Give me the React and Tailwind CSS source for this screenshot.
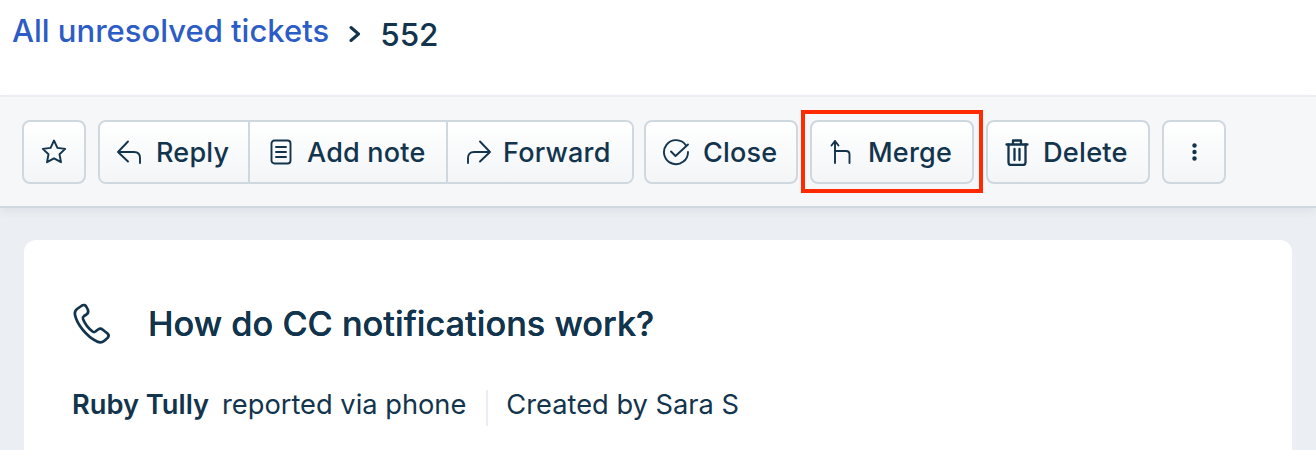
import React from 'react';

function Icon({ children, className = 'w-7 h-7 shrink-0' }) {
  return (
    <svg className={className} viewBox="0 0 28 28" fill="none" stroke="currentColor" strokeWidth="1.9" strokeLinecap="round" strokeLinejoin="round">
      {children}
    </svg>
  );
}

const buttonBase =
  'flex items-center bg-gradient-to-b from-white to-[#f3f5f7] text-[#12344d] text-[27px] font-medium tracking-[0.2px]';

function App() {
  return (
    <div className="h-[450px] w-[1316px] overflow-hidden bg-[#ebeff3] text-[#12344d] font-['Inter',sans-serif]">
      <div className="h-[95px] bg-white px-[12px] pt-[10px] flex items-start">
        <a className="text-[31px] leading-[42px] font-medium text-[#2c5cc5]">All unresolved tickets</a>
        <svg className="ml-[20px] mt-[15px] w-[12px] h-[18px]" viewBox="0 0 12 18" fill="none" stroke="#12344d" strokeWidth="3" strokeLinecap="round" strokeLinejoin="round">
          <path d="M2 2.500l7.500 6.500L2 15.500" />
        </svg>
        <span className="ml-[19px] mt-[4px] text-[31.5px] leading-[42px] font-medium">552</span>
      </div>

      <div className="h-[113px] bg-[#f5f7f9] border-t-2 border-b-2 border-t-[#ebeff3] border-b-[#cfd7df] shadow-[0_4px_8px_rgba(18,52,77,0.06)] pl-[22px] pt-[23px] flex items-start">
        <button className={`${buttonBase} h-[64px] w-[64px] justify-center rounded-[8px] border-2 border-[#cfd7df]`}>
          <Icon>
            <path d="M14 2.500l3.400 7.400 7.800 1-5.700 5.400 1.500 7.900L14 20.300l-7 3.900 1.500-7.900-5.700-5.400 7.800-1z" />
          </Icon>
        </button>

        <div className="ml-[12px] flex h-[64px] rounded-[8px] border-2 border-[#cfd7df]">
          <button className={`${buttonBase} w-[148px] pl-[16px] rounded-l-[6px]`}>
            <Icon>
              <path d="M2 14h16c4 0 6 2.500 6 6v5M12 3.500L2 14l10 9.500" />
            </Icon>
            <span className="ml-[12px] pt-[2px]">Reply</span>
          </button>
          <button className={`${buttonBase} w-[198px] pl-[17px] border-l-2 border-[#cfd7df]`}>
            <Icon>
              <rect x="4.500" y="2.500" width="19" height="23" rx="3" />
              <path d="M9 9h10M9 14h10M9 19h10" />
            </Icon>
            <span className="ml-[12px] pt-[2px]">Add note</span>
          </button>
          <button className={`${buttonBase} w-[186px] pl-[16px] border-l-2 border-[#cfd7df] rounded-r-[6px]`}>
            <Icon>
              <path d="M26 14H10c-4 0-6 2.500-6 6v5M16 3.500L26 14l-10 9.500" />
            </Icon>
            <span className="ml-[11px] pt-[2px]">Forward</span>
          </button>
        </div>

        <button className={`${buttonBase} ml-[10px] h-[64px] w-[154px] pl-[16px] rounded-[8px] border-2 border-[#cfd7df]`}>
          <Icon>
            <path d="M24 7.500A12 12 0 1 0 26 14" />
            <path d="M9 13.500l4.500 4.500L26 6.500" />
          </Icon>
          <span className="ml-[13px] pt-[2px]">Close</span>
        </button>

        <div className="relative ml-[12px]">
          <button className={`${buttonBase} h-[64px] w-[164px] pl-[18px] rounded-[8px] border-2 border-[#cfd7df]`}>
            <Icon>
              <path d="M5 25V3M1.500 7.500L5 3l3.500 4.500" />
              <path d="M5 13h11c2.500 0 3.500 1.500 3.500 3.500V25" />
            </Icon>
            <span className="ml-[10px] pt-[2px]">Merge</span>
          </button>
          <div className="absolute left-[-9px] right-[-9px] top-[-10px] bottom-[-9px] border-4 border-[#ff2a00]" />
        </div>

        <button className={`${buttonBase} ml-[12px] h-[64px] w-[164px] pl-[17px] rounded-[8px] border-2 border-[#cfd7df]`}>
          <svg className="w-[24px] h-[28px] shrink-0" viewBox="0 0 24 28" fill="none" stroke="currentColor" strokeWidth="2.300" strokeLinecap="round" strokeLinejoin="round">
            <path d="M1.500 6.500h21M8 6V2.500h8V6" />
            <path d="M3.500 6.500v18c0 1.500 1 2.500 2.500 2.500h12c1.500 0 2.500-1 2.500-2.500v-18" />
            <path d="M9.500 11v11M14.500 11v11" />
          </svg>
          <span className="ml-[14px] pt-[2px] text-[27.25px]">Delete</span>
        </button>

        <button className={`${buttonBase} ml-[12px] h-[64px] w-[64px] justify-center rounded-[8px] border-2 border-[#cfd7df]`}>
          <svg className="w-[5px] h-[18px]" viewBox="0 0 5 18" fill="currentColor">
            <circle cx="2.500" cy="2.500" r="2.200" />
            <circle cx="2.500" cy="9" r="2.200" />
            <circle cx="2.500" cy="15.500" r="2.200" />
          </svg>
        </button>
      </div>

      <div className="mx-[24px] mt-[32px] h-[240px] rounded-t-[12px] bg-white pl-[48px] pr-[24px] pt-[60px]">
        <div className="flex items-center h-[48px]">
          <svg className="w-[44px] h-[44px] shrink-0" viewBox="0 0 44 44" fill="none" stroke="#12344d" strokeWidth="2.700" strokeLinecap="round" strokeLinejoin="round">
            <path d="M10 3.500l-5 3.500c-2 1.500-2.500 3.500-2 6 2 9 11 21 22 26.500 2.500 1.200 5 1.200 7-.5l3.500-3c1.500-1.500 1.500-3 0-4.500l-5-4c-1.500-1.200-3-1-4.500 0l-2.500 2c-1 .7-2 .7-3 0-4-3-7.500-7.500-9.500-12.500-.4-1.200 0-2.200 1-3l2.500-1.500c1.500-1 2-2.500 1.500-4.500L14.500 5c-.8-2-2.800-2.500-4.500-1.500z" />
          </svg>
          <h1 className="ml-[32px] text-[34.35px] leading-[48px] font-medium [text-shadow:0_0_0.4px_#12344d]">How do CC notifications work?</h1>
        </div>
        <div className="mt-[39px] flex items-center text-[27.25px] leading-[36px]">
          <span className="font-semibold">Ruby Tully</span>
          <span className="ml-[13px]">reported via phone</span>
          <span className="ml-[20px] translate-y-[3px] h-[36px] w-[2px] bg-[#ebeff3]" />
          <span className="ml-[18px]">Created by Sara S</span>
        </div>
      </div>
    </div>
  );
}

export default App;
